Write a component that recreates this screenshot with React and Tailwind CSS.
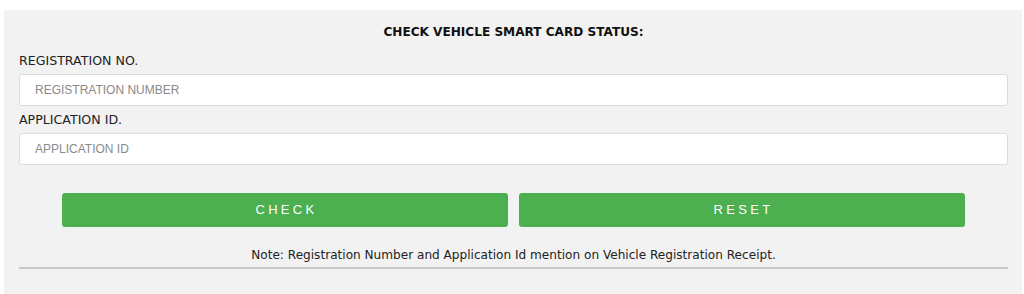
import React from 'react';

const App = () => {
    return (
        <div className="w-[1024px] h-[294px] bg-white pt-[10px] pl-[4px] pr-[2px] overflow-hidden">
            <div className="h-[284px] bg-[#f2f2f2] rounded-tl-[2px] px-[15px] pr-[14px] pt-[12px]" style={{ fontFamily: '"DejaVu Sans", Verdana, sans-serif' }}>
                {/* Title */}
                <h3 className="h-[20px] leading-[20px] text-center text-[12.1px] font-bold text-[#111]">
                    CHECK VEHICLE SMART CARD STATUS:
                </h3>

                {/* Registration */}
                <label className="block mt-[9px] h-[20px] leading-[20px] text-[12.6px] text-[#222]">REGISTRATION NO.</label>
                <input
                    type="text"
                    placeholder="REGISTRATION NUMBER"
                    className="block mt-[3px] w-full h-[32px] bg-white border border-[#dcdcdc] rounded-[3px] px-[15px] text-[12px] text-[#333] placeholder:text-[#8a8a8a] outline-none"
                    style={{ fontFamily: '"Liberation Sans", Arial, sans-serif' }}
                />

                {/* Application */}
                <label className="block mt-[4px] h-[20px] leading-[20px] text-[12.6px] text-[#222]">APPLICATION ID.</label>
                <input
                    type="text"
                    placeholder="APPLICATION ID"
                    className="block mt-[3px] w-full h-[32px] bg-white border border-[#dcdcdc] rounded-[3px] px-[15px] text-[12px] text-[#333] placeholder:text-[#8a8a8a] outline-none"
                    style={{ fontFamily: '"Liberation Sans", Arial, sans-serif' }}
                />

                {/* Buttons */}
                <div className="mt-[28px] mx-[43px] grid grid-cols-2 gap-[11px]" style={{ fontFamily: '"Liberation Sans", Arial, sans-serif' }}>
                    <button className="h-[34px] bg-[#4caf50] rounded-[3px] text-white text-[13px] tracking-[3.3px] pl-[3px]">CHECK</button>
                    <button className="h-[34px] bg-[#4caf50] rounded-[3px] text-white text-[13px] tracking-[3.3px] pl-[3px]">RESET</button>
                </div>

                {/* Note */}
                <p className="mt-[18px] h-[20px] leading-[20px] text-center text-[12.1px] text-[#222]">
                    Note: Registration Number and Application Id mention on Vehicle Registration Receipt.
                </p>
                <hr className="mt-[2px] border-0 h-[2px] bg-[#c8c8c8]" />
            </div>
        </div>
    );
};

export default App;
